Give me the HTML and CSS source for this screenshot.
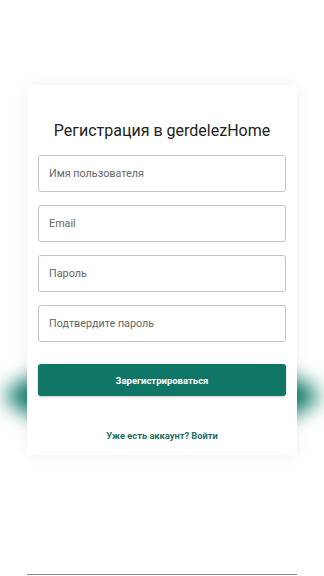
FILE: index.html
```html
<!DOCTYPE html>
<html lang="ru">
<head>
	<meta charset="UTF-8">
	<title>Регистрация</title>
	<link rel="stylesheet" href="styles.css">
</head>
<body>
	<div class="page">
		<!-- размытая подсветка за карточкой -->
		<div class="glow"></div>
		<form class="card">
			<h1 class="title">Регистрация в gerdelezHome</h1>
			<div class="fields">
				<input class="field" type="text" placeholder="Имя пользователя">
				<input class="field" type="email" placeholder="Email">
				<input class="field" type="password" placeholder="Пароль">
				<input class="field" type="password" placeholder="Подтвердите пароль">
			</div>
			<button class="submit" type="button">Зарегистрироваться</button>
			<a class="login-link" href="#">Уже есть аккаунт? Войти</a>
		</form>
		<div class="bottom-line"></div>
	</div>
</body>
</html>
```

FILE: styles.css
```css
*{
	padding: 0;
	margin: 0;
	box-sizing: border-box;
}
body{
	background: #fff;
	font-family: Roboto, "Noto Sans", sans-serif;
	overflow: hidden;
}
.page{
	position: relative;
	width: 324px;
	height: 576px;
	padding-top: 85px;
}
/*подсветка*/
.glow{
	position: absolute;
	left: 6px;
	top: 364px;
	width: 312px;
	height: 64px;
	border-radius: 50%;
	background: #0c7a67;
	filter: blur(10px);
}
/*карточка*/
.card{
	position: relative;
	margin: 0 27px;
	padding: 36px 11px 12px;
	background: #fff;
	box-shadow: 0 0 14px rgba(0, 0, 0, .07);
	display: flex;
	flex-direction: column;
}
.title{
	font-size: 16px;
	font-weight: 400;
	line-height: 20px;
	color: #222;
	text-align: center;
	margin-bottom: 14px;
}
.fields{
	display: flex;
	flex-direction: column;
	gap: 13px;
}
.field{
	height: 37px;
	border: 1px solid #c4c4c4;
	border-radius: 3px;
	padding: 0 10px;
	font-family: inherit;
	font-size: 10.8px;
	color: #333;
	outline: none;
}
.field::placeholder{
	color: #666;
}
.submit{
	margin-top: 22px;
	height: 32px;
	border: none;
	border-radius: 3px;
	background: #0f7566;
	color: #fff;
	font-family: inherit;
	font-size: 9.5px;
	font-weight: 700;
	box-shadow: 0 1px 3px rgba(0, 0, 0, .2);
}
.login-link{
	margin-top: 33px;
	line-height: 14px;
	text-align: center;
	font-size: 9.3px;
	font-weight: 700;
	color: #1b6f62;
	text-decoration: none;
}
.bottom-line{
	margin: 119px 27px 0;
	height: 1px;
	background: #8a8a8a;
}
```
